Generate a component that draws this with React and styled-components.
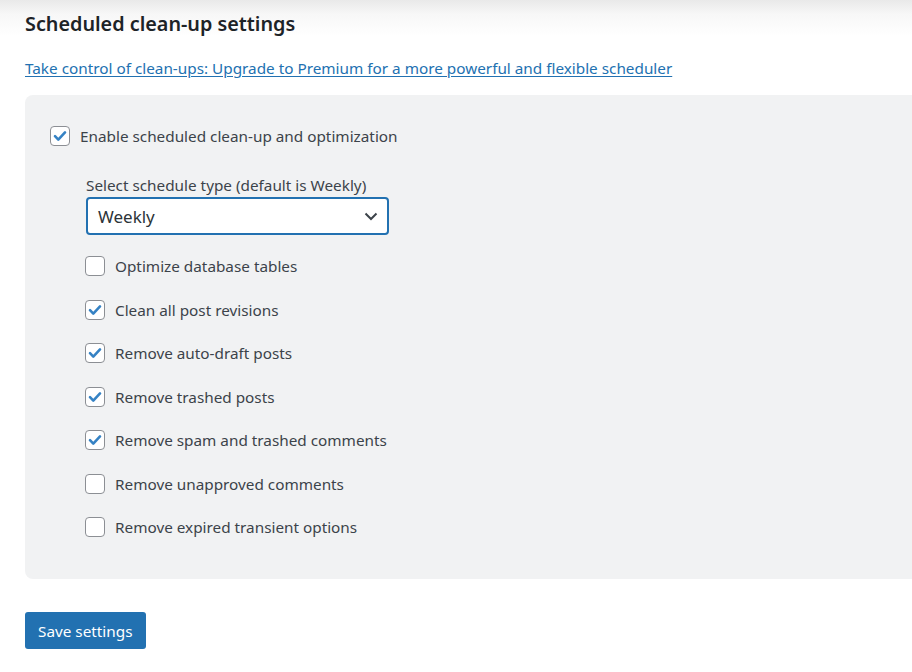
import React from 'react';
import styled, { createGlobalStyle } from 'styled-components';

const GlobalStyle = createGlobalStyle`
  html, body {
    margin: 0;
    padding: 0;
    background: linear-gradient(#e9e9e9 0px, #f7f7f7 14px, #ffffff 36px) no-repeat, #ffffff;
    font-family: "Noto Sans", "Open Sans", sans-serif;
    color: #3c434a;
    overflow: hidden;
  }
`;

const Page = styled.div`
  width: 912px;
  height: 672px;
  padding: 10px 0 0 25px;
  box-sizing: border-box;
  overflow: hidden;
`;

const Title = styled.h2`
  margin: 0;
  font-size: 19.8px;
  font-weight: 600;
  line-height: 28px;
  color: #1d2327;
`;

const UpgradeLink = styled.a`
  display: inline-block;
  margin-top: 19px;
  font-size: 15.3px;
  line-height: 22px;
  color: #2271b1;
  text-decoration: underline;
  text-underline-offset: 2px;
`;

const Panel = styled.div`
  margin-top: 16px;
  width: 920px;
  height: 484px;
  box-sizing: border-box;
  background: #f1f2f3;
  border-radius: 8px 0 0 8px;
  padding: 31px 0 0 25px;
`;

const CheckRow = styled.label`
  display: flex;
  align-items: center;
  gap: 10px;
  font-size: 15.3px;
  line-height: 20px;
  height: 20px;
`;

const Box = styled.span`
  width: 20px;
  height: 20px;
  box-sizing: border-box;
  border: 1px solid #8c8f94;
  border-radius: 4px;
  background: #fff;
  display: flex;
  align-items: center;
  justify-content: center;
  flex-shrink: 0;
`;

const Indent = styled.div`
  padding-left: 35px;
  margin-top: 30px;
`;

const SelectLabel = styled.div`
  font-size: 15.3px;
  line-height: 18px;
  color: #3c434a;
  padding-left: 1px;
`;

const SelectBox = styled.div`
  margin-top: 3px;
  margin-left: 1px;
  width: 303px;
  height: 38px;
  box-sizing: border-box;
  border: 2px solid #2271b1;
  border-radius: 4px;
  background: #fff;
  display: flex;
  align-items: center;
  justify-content: space-between;
  padding: 0 8px 0 10px;
  font-size: 17px;
  color: #2c3338;
`;

const Options = styled.div`
  margin-top: 21px;
  display: flex;
  flex-direction: column;
  gap: 23.5px;
`;

const SaveButton = styled.button`
  margin-top: 33px;
  height: 37px;
  padding: 0 13px;
  border: none;
  border-radius: 3px;
  background: #2271b1;
  color: #fff;
  font-family: inherit;
  font-size: 15.3px;
  cursor: pointer;
`;

const Check = ({ checked }) => (
  <Box>
    {checked && (
      <svg width="16" height="16" viewBox="0 0 16 16">
        <path d="M3 8.2 L6.3 11.6 L13 4.4" fill="none" stroke="#3582c4" strokeWidth="2.6" strokeLinecap="round" strokeLinejoin="round" />
      </svg>
    )}
  </Box>
);

const options = [
  ['Optimize database tables', false],
  ['Clean all post revisions', true],
  ['Remove auto-draft posts', true],
  ['Remove trashed posts', true],
  ['Remove spam and trashed comments', true],
  ['Remove unapproved comments', false],
  ['Remove expired transient options', false],
];

export default function App() {
  return (
    <Page>
      <GlobalStyle />
      <Title>Scheduled clean-up settings</Title>
      <UpgradeLink href="#">Take control of clean-ups: Upgrade to Premium for a more powerful and flexible scheduler</UpgradeLink>
      <Panel>
        <CheckRow>
          <Check checked />
          Enable scheduled clean-up and optimization
        </CheckRow>
        <Indent>
          <SelectLabel>Select schedule type (default is Weekly)</SelectLabel>
          <SelectBox>
            Weekly
            <svg width="16" height="16" viewBox="0 0 16 16">
              <path d="M2.5 5.5 L8 11 L13.5 5.5" fill="none" stroke="#3c434a" strokeWidth="2" />
            </svg>
          </SelectBox>
          <Options>
            {options.map(([text, on]) => (
              <CheckRow key={text}>
                <Check checked={on} />
                {text}
              </CheckRow>
            ))}
          </Options>
        </Indent>
      </Panel>
      <SaveButton>Save settings</SaveButton>
    </Page>
  );
}
